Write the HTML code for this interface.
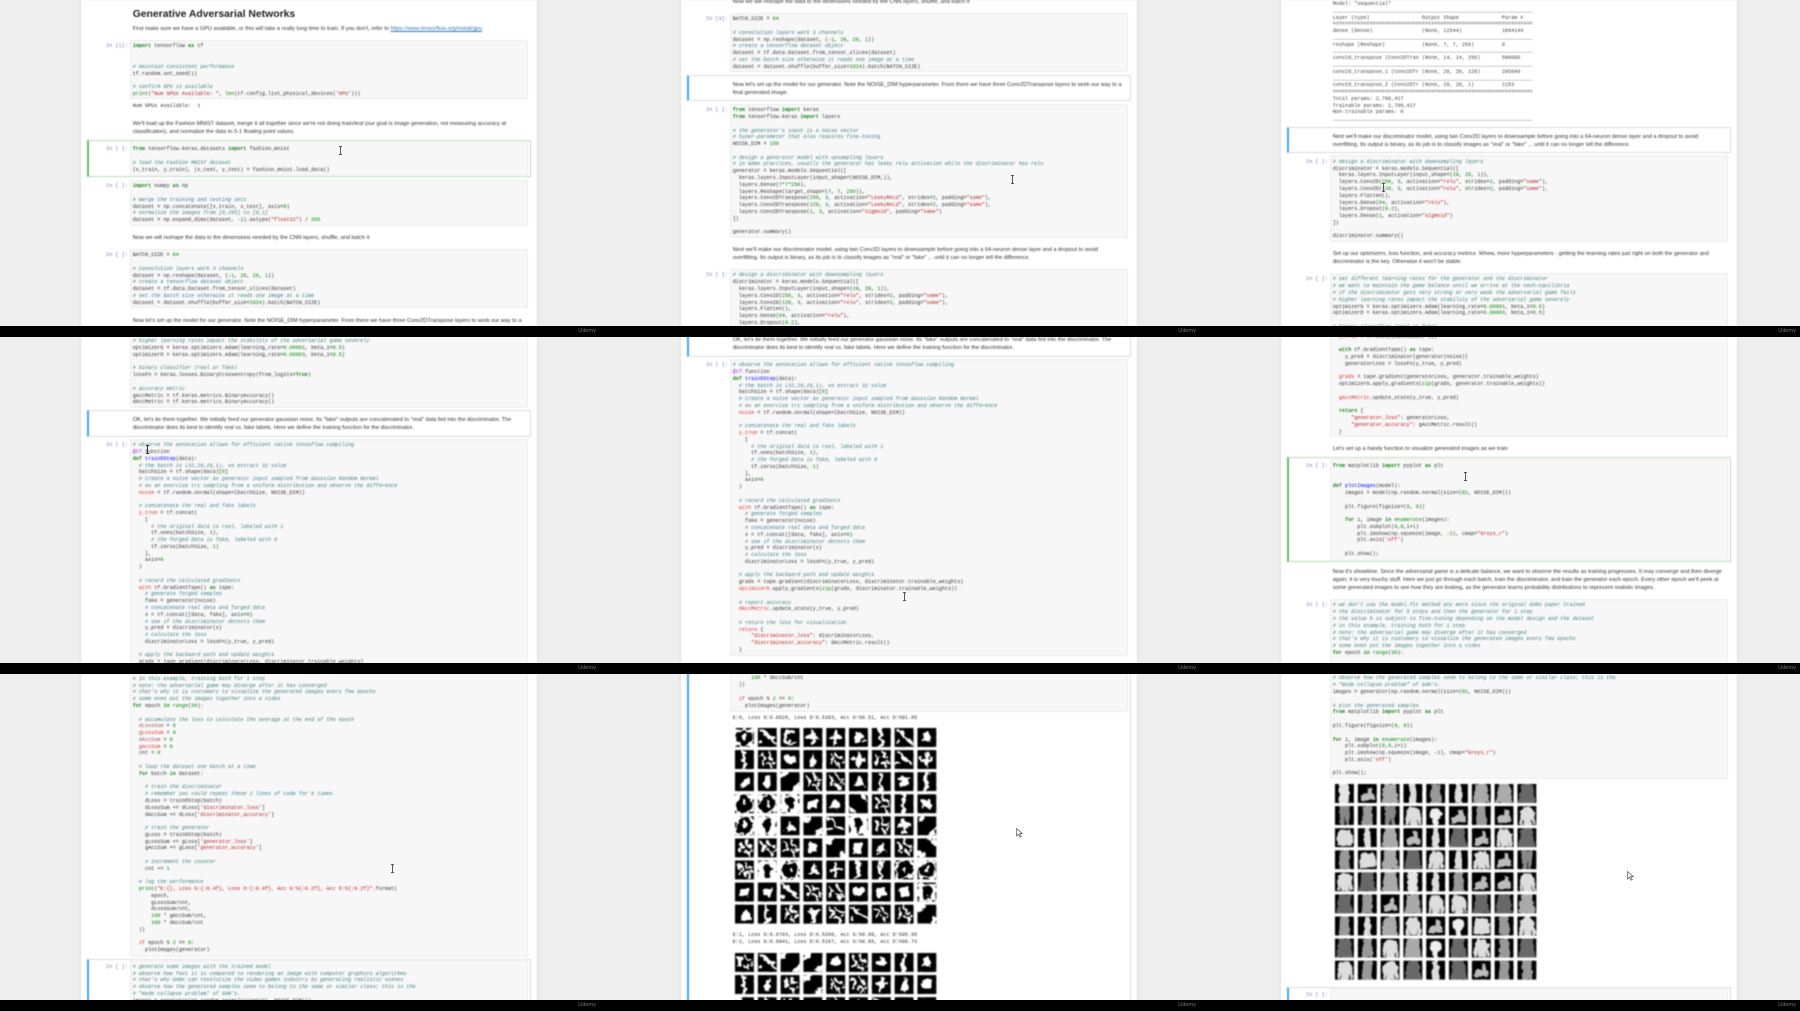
<!DOCTYPE html>
<html><head><meta charset="utf-8"><title>Generative Adversarial Networks</title>
<style>
html,body{margin:0;padding:0;background:#000;width:1800px;height:1011px;overflow:hidden}
.t{position:absolute;width:600px;height:337px;background:#000;overflow:hidden}
.v{position:absolute;left:0;top:0;width:600px;height:326px;background:#eee;overflow:hidden}
.v>*{filter:blur(.5px)}
.w{position:absolute;left:81px;width:456px;top:0;height:326px;background:#fff;box-shadow:0 0 3px #ccc}
.c{position:absolute;left:130px;width:398px;background:#f7f7f7;border:1px solid #ececec;box-sizing:border-box}
.s{position:absolute;left:87px;width:444px;background:#fff;border:1px solid #dcdcdc;border-left:2px solid #42a5f5;box-sizing:border-box}
.s.g{border-color:#b9dcbb;border-left-color:#66bb6a}
pre{position:absolute;left:132.7px;margin:.6px 0 0;font:5.13px/6.78px "Liberation Mono",monospace;color:#333;white-space:pre}
pre b{color:#1a851a;font-weight:700}
pre i{color:#408080;font-style:italic}
pre u{color:#ba2121;text-decoration:none}
pre s{color:#080;text-decoration:none}
pre a{color:#d33}
pre var{color:#00f;font-style:normal}
pre em{color:#a2f;font-style:normal}
.x{position:absolute;left:132.7px;margin-top:.6px;font:5.6px/8px "Liberation Sans",sans-serif;color:#333;white-space:nowrap}
.x span{color:#337ab7;text-decoration:underline}
h1{position:absolute;left:132.7px;top:8px;margin:0;font:700 10.4px/14px "Liberation Sans",sans-serif;color:#222;white-space:nowrap}
.p{position:absolute;left:90px;width:37.7px;margin-top:.6px;text-align:right;font:5.13px/6.78px "Liberation Mono",monospace;color:#7480ad;white-space:pre}
.u{position:absolute;right:4px;top:327px;font:5.6px/9px "Liberation Sans",sans-serif;color:#777;filter:blur(.3px)}
.k{position:absolute;filter:blur(.25px)}
.g9{position:absolute;left:135.3px;filter:blur(.7px)}
</style></head><body>
<svg width="0" height="0" style="position:absolute"><defs>
<filter id="o" x="0" y="0" width="100%" height="100%" color-interpolation-filters="sRGB"><feTurbulence type="fractalNoise" baseFrequency=".17" numOctaves="2" seed="3"/><feDisplacementMap in="SourceGraphic" scale="8" xChannelSelector="R" yChannelSelector="G"/></filter>
<filter id="q" x="0" y="0" width="100%" height="100%" color-interpolation-filters="sRGB"><feTurbulence type="fractalNoise" baseFrequency=".22" numOctaves="2" seed="7"/><feDisplacementMap in="SourceGraphic" scale="4" xChannelSelector="R" yChannelSelector="G"/></filter>
<pattern id="gb" width="22.8" height="22.08" patternUnits="userSpaceOnUse"><rect width="19" height="19"/></pattern>
<pattern id="gw" width="22.8" height="22.08" patternUnits="userSpaceOnUse"><path fill="#fff" d="M19 0h3.8v22.08H19zM0 19h22.8v3.08H0z"/></pattern>
<g id="b0"><rect width="19" height="19"/><ellipse cx="9.5" cy="9" rx="5.5" ry="4.5" fill="#fff"/></g>
<g id="b1"><rect width="19" height="19"/><path d="M2 3C8 1 7 8 11 9S15 14 18 15M1 16l4-4" stroke="#fff" stroke-width="3" fill="none"/></g>
<g id="b2"><rect width="19" height="19" fill="#fff"/><circle cx="9.5" cy="9.5" r="8" fill="#000"/><path d="M8 6h3v6H8z" fill="#fff"/></g>
<g id="b3"><rect width="19" height="19"/><path d="M9.5 2v15M3 9h13" stroke="#fff" stroke-width="3.5"/></g>
<g id="bb"><rect width="19" height="19"/><path d="M3 3l4 5-3 6M10 1l2 6 5 1M9 12l4 2 1 4M15 13l3-2" stroke="#fff" stroke-width="2.5" fill="none"/></g>
<g id="b4"><rect width="19" height="19"/><path d="M10 0h9v8l-6-2zM0 12l5 1 3 6H0z" fill="#fff"/></g>
<g id="b5"><rect width="19" height="19"/><path d="M4 14L11 4l5 10z" fill="#fff"/></g>
<g id="b6"><rect width="19" height="19"/><path d="M7 0C13 4 5 9 9 13S8 17 8 19" stroke="#fff" stroke-width="3.5" fill="none"/></g>
<g id="b7"><rect width="19" height="19"/><path d="M0 0h8l-2 5-6 2zM19 19h-8l3-6 5-2z" fill="#fff"/></g>
<g id="b8"><rect width="19" height="19" fill="#fff"/><path d="M9 2c5 1 6 5 4 8s0 6-4 7c-3 0-2-4-3-6s-1-8 3-9z"/></g>
<g id="b9"><rect width="19" height="19"/><path d="M2 5h15l-5 5v8H8v-8z" fill="#fff"/></g>
<g id="ba"><rect width="19" height="19"/><rect x="5" y="5" width="9" height="9" rx="2" fill="#fff"/></g>
<g id="bc"><rect width="19" height="19"/><path d="M14 4C6 2 3 8 5 12s6 3 9 2" stroke="#fff" stroke-width="3" fill="none"/></g>
<g id="bd"><rect width="19" height="19"/><path d="M11 2C13 8 14 14 10 17 7 15 5 12 7 9s3-5 4-7z" fill="#fff"/></g>
<g id="f0"><rect width="19" height="19"/><rect x="4" width="10" height="19" rx="2" fill="#e4e4e4"/></g>
<g id="f1"><rect width="19" height="19"/><path d="M7 0h5l1 8v11H6V8z" fill="#ddd"/></g>
<g id="f2"><rect width="19" height="19"/><path d="M5 0h9l1 19H4z" fill="#999"/></g>
<g id="f3"><rect width="19" height="19"/><path d="M4 0h11l3 19H1z" fill="#aaa"/></g>
<g id="f4"><rect width="19" height="19"/><path d="M4 0h11l3 19H1z" fill="#686868"/></g>
<g id="f5"><rect width="19" height="19"/><path d="M6 1h7l4 4 1 13-3 1-1-7v7H6v-7l-1 7-3-1 1-13z" fill="#ddd"/></g>
<g id="f6"><rect width="19" height="19"/><path d="M4 2h11l3 6v9l-16 1V8z" fill="#ddd"/></g>
<g id="f7"><rect width="19" height="19"/><path d="M3 11c4-3 9-3 13-1l1 6-14 1zM10 3l4 1v5l-4 1z" fill="#bbb"/></g>
<g id="f8"><rect width="19" height="19"/><circle cx="9.5" cy="8" r="6" fill="#eee"/><rect x="7" y="12" width="5" height="7" fill="#eee"/></g>
<g id="f9"><rect width="19" height="19"/><path d="M4 0h11l-1 19h-3l-1-9-1 9H5z" fill="#888"/></g>
</defs></svg>

<!-- Tile 1 -->
<div class="t" style="left:0;top:0"><div class="v"><div class="w"></div>
<h1>Generative Adversarial Networks</h1>
<div class="x" style="top:24.7px">First make sure we have a GPU available, or this will take a really long time to train. If you don't, refer to <span>https://www.tensorflow.org/install/gpu</span></div>
<div class="c" style="top:40px;height:59.3px"></div>
<div class="p" style="top:42.9px">In [1]:</div>
<pre style="top:42.9px"><b>import</b> tensorflow <b>as</b> tf


<i># maintain consistent performance</i>
tf.random.set_seed(<s>1</s>)

<i># confirm GPU is available</i>
<s>print</s>(<u>"Num GPUs Available: "</u>, <s>len</s>(tf.config.list_physical_devices(<u>'GPU'</u>)))</pre>
<pre style="top:102.3px">Num GPUs Available:  1</pre>
<div class="x" style="top:119px">We'll load up the Fashion MNIST dataset, merge it all together since we're not doing train/test (our goal is image generation, not measuring accuracy at<br>classification), and normalize the data to 0-1 floating point values.</div>
<div class="s g" style="top:140.3px;height:37px"></div>
<div class="c" style="top:141.3px;height:35px"></div>
<div class="p" style="top:145.6px">In [ ]:</div>
<pre style="top:145.6px"><b>from</b> tensorflow.keras.datasets <b>import</b> fashion_mnist

<i># load the Fashion MNIST dataset</i>
(x_train, y_train), (x_test, y_test) = fashion_mnist.load_data()</pre>
<div class="c" style="top:180.3px;height:45.7px"></div>
<div class="p" style="top:182.6px">In [ ]:</div>
<pre style="top:182.6px"><b>import</b> numpy <b>as</b> np

<i># merge the training and testing sets</i>
dataset = np.concatenate([x_train, x_test], axis=<s>0</s>)
<i># normalize the images from [0,255] to [0,1]</i>
dataset = np.expand_dims(dataset, -<s>1</s>).astype(<u>"float32"</u>) / <s>255</s></pre>
<div class="x" style="top:233.7px">Now we will reshape the data to the dimensions needed by the CNN layers, shuffle, and batch it</div>
<div class="c" style="top:249.3px;height:59px"></div>
<div class="p" style="top:251.6px">In [ ]:</div>
<pre style="top:251.6px">BATCH_SIZE = <s>64</s>

<i># convolution layers work 3 channels</i>
dataset = np.reshape(dataset, (-<s>1</s>, <s>28</s>, <s>28</s>, <s>1</s>))
<i># create a tensorflow dataset object</i>
dataset = tf.data.Dataset.from_tensor_slices(dataset)
<i># set the batch size otherwise it reads one image at a time</i>
dataset = dataset.shuffle(buffer_size=<s>1024</s>).batch(BATCH_SIZE)</pre>
<div class="x" style="top:316px">Now let's set up the model for our generator. Note the NOISE_DIM hyperparameter. From there we have three Conv2DTranspose layers to work our way to a</div>
<svg class="k" style="left:337.5px;top:145.5px" width="5" height="9"><path d="M1 .5h3M2.5 .5v8M1 8.5h3" stroke="#555" fill="none"/></svg>
</div><div class="u">Udemy</div></div>

<!-- Tile 2 -->
<div class="t" style="left:600px;top:0"><div class="v"><div class="w"></div>
<div class="x" style="top:-2.3px">Now we will reshape the data to the dimensions needed by the CNN layers, shuffle, and batch it</div>
<div class="c" style="top:13.3px;height:59px"></div>
<div class="p" style="top:15.6px">In [4]:</div>
<pre style="top:15.6px">BATCH_SIZE = <s>64</s>

<i># convolution layers work 3 channels</i>
dataset = np.reshape(dataset, (-<s>1</s>, <s>28</s>, <s>28</s>, <s>1</s>))
<i># create a tensorflow dataset object</i>
dataset = tf.data.Dataset.from_tensor_slices(dataset)
<i># set the batch size otherwise it reads one image at a time</i>
dataset = dataset.shuffle(buffer_size=<s>1024</s>).batch(BATCH_SIZE)</pre>
<div class="s" style="top:75.3px;height:26px"></div>
<div class="x" style="top:80.3px">Now let's set up the model for our generator. Note the NOISE_DIM hyperparameter. From there we have three Conv2DTranspose layers to work our way to a<br>final generated image.</div>
<div class="c" style="top:104px;height:134px"></div>
<div class="p" style="top:106.6px">In [ ]:</div>
<pre style="top:106.6px"><b>from</b> tensorflow <b>import</b> keras
<b>from</b> tensorflow.keras <b>import</b> layers

<i># the generator's input is a noise vector</i>
<i># hyper-parameter that also requires fine-tuning</i>
NOISE_DIM = <s>150</s>

<i># design a generator model with upsampling layers</i>
<i># in GANs practices, usually the generator has leaky relu activation while the discriminator has relu</i>
generator = keras.models.Sequential([
  keras.layers.InputLayer(input_shape=(NOISE_DIM,)),
  layers.Dense(<s>7</s>*<s>7</s>*<s>256</s>),
  layers.Reshape(target_shape=(<s>7</s>, <s>7</s>, <s>256</s>)),
  layers.Conv2DTranspose(<s>256</s>, <s>3</s>, activation=<u>"LeakyReLU"</u>, strides=<s>2</s>, padding=<u>"same"</u>),
  layers.Conv2DTranspose(<s>128</s>, <s>3</s>, activation=<u>"LeakyReLU"</u>, strides=<s>2</s>, padding=<u>"same"</u>),
  layers.Conv2DTranspose(<s>1</s>, <s>3</s>, activation=<u>"sigmoid"</u>, padding=<u>"same"</u>)
])

generator.summary()</pre>
<div class="x" style="top:245.7px">Next we'll make our discriminator model, using two Conv2D layers to downsample before going into a 64-neuron dense layer and a dropout to avoid<br>overfitting. Its output is binary, as its job is to classify images as "real" or "fake" ... until it can no longer tell the difference.</div>
<div class="c" style="top:269.3px;height:80px"></div>
<div class="p" style="top:271.9px">In [ ]:</div>
<pre style="top:271.9px"><i># design a discriminator with downsampling layers</i>
discriminator = keras.models.Sequential([
  keras.layers.InputLayer(input_shape=(<s>28</s>, <s>28</s>, <s>1</s>)),
  layers.Conv2D(<s>256</s>, <s>3</s>, activation=<u>"relu"</u>, strides=<s>2</s>, padding=<u>"same"</u>),
  layers.Conv2D(<s>128</s>, <s>3</s>, activation=<u>"relu"</u>, strides=<s>2</s>, padding=<u>"same"</u>),
  layers.Flatten(),
  layers.Dense(<s>64</s>, activation=<u>"relu"</u>),
  layers.Dropout(<s>0.2</s>),</pre>
<svg class="k" style="left:409.5px;top:174.5px" width="5" height="9"><path d="M1 .5h3M2.5 .5v8M1 8.5h3" stroke="#555" fill="none"/></svg>
</div><div class="u">Udemy</div></div>

<!-- Tile 3 -->
<div class="t" style="left:1200px;top:0"><div class="v"><div class="w"></div>
<pre style="top:.4px;color:#444">Model: "sequential"
_________________________________________________________________
Layer (type)                 Output Shape              Param #
=================================================================
dense (Dense)                (None, 12544)             1894144
_________________________________________________________________
reshape (Reshape)            (None, 7, 7, 256)         0
_________________________________________________________________
conv2d_transpose (Conv2DTran (None, 14, 14, 256)       590080
_________________________________________________________________
conv2d_transpose_1 (Conv2DTr (None, 28, 28, 128)       295040
_________________________________________________________________
conv2d_transpose_2 (Conv2DTr (None, 28, 28, 1)         1153
=================================================================
Total params: 2,780,417
Trainable params: 2,780,417
Non-trainable params: 0
_________________________________________________________________</pre>
<div class="s" style="top:126.7px;height:26px"></div>
<div class="x" style="top:132px">Next we'll make our discriminator model, using two Conv2D layers to downsample before going into a 64-neuron dense layer and a dropout to avoid<br>overfitting. Its output is binary, as its job is to classify images as "real" or "fake" ... until it can no longer tell the difference.</div>
<div class="c" style="top:155.3px;height:86.7px"></div>
<div class="p" style="top:158.3px">In [ ]:</div>
<pre style="top:158.3px"><i># design a discriminator with downsampling layers</i>
discriminator = keras.models.Sequential([
  keras.layers.InputLayer(input_shape=(<s>28</s>, <s>28</s>, <s>1</s>)),
  layers.Conv2D(<s>256</s>, <s>3</s>, activation=<u>"relu"</u>, strides=<s>2</s>, padding=<u>"same"</u>),
  layers.Conv2D(<s>128</s>, <s>3</s>, activation=<u>"relu"</u>, strides=<s>2</s>, padding=<u>"same"</u>),
  layers.Flatten(),
  layers.Dense(<s>64</s>, activation=<u>"relu"</u>),
  layers.Dropout(<s>0.2</s>),
  layers.Dense(<s>1</s>, activation=<u>"sigmoid"</u>)
])

discriminator.summary()</pre>
<div class="x" style="top:249.7px">Set up our optimizers, loss function, and accuracy metrics. Whew, more hyperparameters - getting the learning rates just right on both the generator and<br>discriminator is the key. Otherwise it won't be stable.</div>
<div class="c" style="top:273.3px;height:70px"></div>
<div class="p" style="top:275.9px">In [ ]:</div>
<pre style="top:275.9px"><i># set different learning rates for the generator and the discriminator</i>
<i># we want to maintain the game balance until we arrive at the nash-equilibria</i>
<i># if the discriminator gets very strong or very weak the adversarial game fails</i>
<i># higher learning rates impact the stability of the adversarial game severely</i>
optimizerG = keras.optimizers.Adam(learning_rate=<s>0.00001</s>, beta_1=<s>0.5</s>)
optimizerD = keras.optimizers.Adam(learning_rate=<s>0.00003</s>, beta_1=<s>0.5</s>)

<i># binary classifier (real or fake)</i></pre>
<svg class="k" style="left:181px;top:183px" width="5" height="9"><path d="M1 .5h3M2.5 .5v8M1 8.5h3" stroke="#555" fill="none"/></svg>
</div><div class="u">Udemy</div></div>

<!-- Tile 4 -->
<div class="t" style="left:0;top:337px"><div class="v"><div class="w"></div>
<div class="c" style="top:-22px;height:92.7px"></div>
<pre style="top:-19.7px"><i># set different learning rates for the generator and the discriminator</i>
<i># we want to maintain the game balance until we arrive at the nash-equilibria</i>
<i># if the discriminator gets very strong or very weak the adversarial game fails</i>
<i># higher learning rates impact the stability of the adversarial game severely</i>
optimizerG = keras.optimizers.Adam(learning_rate=<s>0.00001</s>, beta_1=<s>0.5</s>)
optimizerD = keras.optimizers.Adam(learning_rate=<s>0.00003</s>, beta_1=<s>0.5</s>)

<i># binary classifier (real or fake)</i>
lossFn = keras.losses.BinaryCrossentropy(from_logits=<b>True</b>)

<i># accuracy metric</i>
gAccMetric = tf.keras.metrics.BinaryAccuracy()
dAccMetric = tf.keras.metrics.BinaryAccuracy()</pre>
<div class="s" style="top:73.3px;height:26.4px"></div>
<div class="x" style="top:78.7px">OK, let's tie them together. We initially feed our generator gaussian noise. Its "fake" outputs are concatenated to "real" data fed into the discriminator. The<br>discriminator does its best to identify real vs. fake labels. Here we define the training function for the discriminator.</div>
<div class="c" style="top:102.3px;height:240px"></div>
<div class="p" style="top:104.6px">In [ ]:</div>
<pre style="top:104.6px"><i># observe the annotation allows for efficient native tensoflow compiling</i>
<em>@tf.</em>function
<b>def</b> <var>trainDStep</var>(data):
  <i># the batch is (32,28,28,1), so extract 32 value</i>
  batchSize = tf.shape(data)[<s>0</s>]
  <i># create a noise vector as generator input sampled from Gaussian Random Normal</i>
  <i># As an exercise try sampling from a uniform distribution and observe the difference</i>
  <a>noise</a> = tf.random.normal(shape=(batchSize, NOISE_DIM))

  <i># concatenate the real and fake labels</i>
  <a>y_true</a> = tf.concat(
    [
      <i># the original data is real, labeled with 1</i>
      tf.ones(batchSize, <s>1</s>),
      <i># the forged data is fake, labeled with 0</i>
      tf.zeros(batchSize, <s>1</s>)
    ],
    axis=<s>0</s>
  )

  <i># record the calculated gradients</i>
  <a>with</a> tf.GradientTape() <b>as</b> tape:
    <i># generate forged samples</i>
    fake = generator(noise)
    <i># concatenate real data and forged data</i>
    x = tf.concat([data, fake], axis=<s>0</s>)
    <i># see if the discriminator detects them</i>
    y_pred = discriminator(x)
    <i># calculate the loss</i>
    discriminatorLoss = lossFn(y_true, y_pred)

  <i># apply the backward path and update weights</i>
  grads = tape.gradient(discriminatorLoss, discriminator.trainable_weights)</pre>
<svg class="k" style="left:144.5px;top:108px" width="5" height="9" viewBox="0 0 5 9"><path d="M1 .5h3M2.5 .5v8M1 8.5h3" stroke="#333" fill="none"/></svg>
</div><div class="u">Udemy</div></div>

<!-- Tile 5 -->
<div class="t" style="left:600px;top:337px"><div class="v"><div class="w"></div>
<div class="s" style="top:-6.7px;height:26.4px"></div>
<div class="x" style="top:-1.3px">OK, let's tie them together. We initially feed our generator gaussian noise. Its "fake" outputs are concatenated to "real" data fed into the discriminator. The<br>discriminator does its best to identify real vs. fake labels. Here we define the training function for the discriminator.</div>
<div class="c" style="top:22.3px;height:296.4px"></div>
<div class="p" style="top:24.6px">In [ ]:</div>
<pre style="top:24.6px"><i># observe the annotation allows for efficient native tensoflow compiling</i>
<em>@tf.</em>function
<b>def</b> <var>trainDStep</var>(data):
  <i># the batch is (32,28,28,1), so extract 32 value</i>
  batchSize = tf.shape(data)[<s>0</s>]
  <i># create a noise vector as generator input sampled from Gaussian Random Normal</i>
  <i># As an exercise try sampling from a uniform distribution and observe the difference</i>
  <a>noise</a> = tf.random.normal(shape=(batchSize, NOISE_DIM))

  <i># concatenate the real and fake labels</i>
  <a>y_true</a> = tf.concat(
    [
      <i># the original data is real, labeled with 1</i>
      tf.ones(batchSize, <s>1</s>),
      <i># the forged data is fake, labeled with 0</i>
      tf.zeros(batchSize, <s>1</s>)
    ],
    axis=<s>0</s>
  )

  <i># record the calculated gradients</i>
  <a>with</a> tf.GradientTape() <b>as</b> tape:
    <i># generate forged samples</i>
    fake = generator(noise)
    <i># concatenate real data and forged data</i>
    x = tf.concat([data, fake], axis=<s>0</s>)
    <i># see if the discriminator detects them</i>
    y_pred = discriminator(x)
    <i># calculate the loss</i>
    discriminatorLoss = lossFn(y_true, y_pred)

  <i># apply the backward path and update weights</i>
  grads = tape.gradient(discriminatorLoss, discriminator.trainable_weights)
  <a>optimizerD</a>.apply_gradients(<s>zip</s>(grads, discriminator.trainable_weights))

  <i># report accuracy</i>
  <a>dAccMetric</a>.update_state(y_true, y_pred)

  <i># return the loss for visualization</i>
  <a>return</a> {
      <u>"discriminator_loss"</u>: discriminatorLoss,
      <u>"discriminator_accuracy"</u>: dAccMetric.result()
  }</pre>
<svg class="k" style="left:301.5px;top:254.5px" width="5" height="9"><path d="M1 .5h3M2.5 .5v8M1 8.5h3" stroke="#555" fill="none"/></svg>
</div><div class="u">Udemy</div></div>

<!-- Tile 6 -->
<div class="t" style="left:1200px;top:337px"><div class="v"><div class="w"></div>
<div class="c" style="top:-10px;height:109.7px"></div>
<pre style="top:-3.8px">  <a>y_true</a> = tf.ones((batchSize, <s>1</s>))

  <b>with</b> tf.GradientTape() <b>as</b> tape:
    y_pred = discriminator(generator(noise))
    generatorLoss = lossFn(y_true, y_pred)

  <a>grads</a> = tape.gradient(generatorLoss, generator.trainable_weights)
  optimizerG.apply_gradients(<s>zip</s>(grads, generator.trainable_weights))

  <a>gAccMetric</a>.update_state(y_true, y_pred)

  <b>return</b> {
      <u>"generator_loss"</u>: generatorLoss,
      <u>"generator_accuracy"</u>: gAccMetric.result()
  }</pre>
<div class="x" style="top:107px">Let's set up a handy function to visualize generated images as we train</div>
<div class="s g" style="top:120.3px;height:105px"></div>
<div class="c" style="top:121.3px;height:103px"></div>
<div class="p" style="top:125.3px">In [ ]:</div>
<pre style="top:125.3px"><b>from</b> matplotlib <b>import</b> pyplot <b>as</b> plt


<b>def</b> <var>plotImages</var>(model):
    images = model(np.random.normal(size=(<s>81</s>, NOISE_DIM)))

    plt.figure(figsize=(<s>9</s>, <s>9</s>))

    <b>for</b> i, image <b>in</b> <s>enumerate</s>(images):
        plt.subplot(<s>9</s>,<s>9</s>,i+<s>1</s>)
        plt.imshow(np.squeeze(image, -<s>1</s>), cmap=<u>"Greys_r"</u>)
        plt.axis(<u>'off'</u>)

    plt.show();</pre>
<div class="x" style="top:230.3px">Now it's showtime. Since the adversarial game is a delicate balance, we want to observe the results as training progresses. It may converge and then diverge<br>again; it is very touchy stuff. Here we just go through each batch, train the discriminator, and train the generator each epoch. Every other epoch we'll peek at<br>some generated images to see how they are looking, as the generator learns probability distributions to represent realistic images.</div>
<div class="c" style="top:262.3px;height:70px"></div>
<div class="p" style="top:264.9px">In [ ]:</div>
<pre style="top:264.9px"><i># we don't use the model.fit method any more since the original GANs paper trained</i>
<i># the discriminator for 5 steps and then the generator for 1 step</i>
<i># the value 5 is subject to fine-tuning depending on the model design and the dataset</i>
<i># in this example, training both for 1 step</i>
<i># note: the adversarial game may diverge after it has converged</i>
<i># that's why it is customary to visualize the generated images every few epochs</i>
<i># some even put the images together into a video</i>
<b>for</b> epoch <b>in</b> <s>range</s>(<s>30</s>):</pre>
<svg class="k" style="left:262.5px;top:134.5px" width="5" height="9"><path d="M1 .5h3M2.5 .5v8M1 8.5h3" stroke="#555" fill="none"/></svg>
</div><div class="u">Udemy</div></div>

<!-- Tile 7 -->
<div class="t" style="left:0;top:674px"><div class="v"><div class="w"></div>
<div class="c" style="top:-10px;height:292.7px"></div>
<pre style="top:1.3px"><i># in this example, training both for 1 step</i>
<i># note: the adversarial game may diverge after it has converged</i>
<i># that's why it is customary to visualize the generated images every few epochs</i>
<i># some even put the images together into a video</i>
<b>for</b> epoch <b>in</b> <s>range</s>(<s>30</s>):

  <i># accumulate the loss to calculate the average at the end of the epoch</i>
  <a style="color:#a55">dLossSum</a> = <s>0</s>
  <a>gLossSum</a> = <s>0</s>
  <a style="color:#a55">dAccSum</a> = <s>0</s>
  <a>gAccSum</a> = <s>0</s>
  cnt = <s>0</s>

  <i># loop the dataset one batch at a time</i>
  <b>for</b> batch <b>in</b> dataset:

    <i># train the discriminator</i>
    <i># remember you could repeat these 2 lines of code for K times</i>
    dLoss = trainDStep(batch)
    dLossSum += dLoss[<u>'discriminator_loss'</u>]
    dAccSum += dLoss[<u>'discriminator_accuracy'</u>]

    <i># train the generator</i>
    gLoss = trainGStep(batch)
    gLossSum += gLoss[<u>'generator_loss'</u>]
    gAccSum += gLoss[<u>'generator_accuracy'</u>]

    <i># increment the counter</i>
    cnt += <s>1</s>

  <i># log the performance</i>
  <s>print</s>(<u>"E:{}, Loss G:{:0.4f}, Loss D:{:0.4f}, Acc G:%{:0.2f}, Acc D:%{:0.2f}"</u>.format(
      epoch,
      gLossSum/cnt,
      dLossSum/cnt,
      <s>100</s> * gAccSum/cnt,
      <s>100</s> * dAccSum/cnt
  ))

  <a>if</a> epoch % <s>2</s> == <s>0</s>:
    plotImages(generator)</pre>
<div class="s" style="top:285px;height:60px"></div>
<div class="c" style="top:286px;height:58px"></div>
<div class="p" style="top:289.3px">In [ ]:</div>
<pre style="top:289.3px"><i># generate some images with the trained model</i>
<i># observe how fast it is compared to rendering an image with computer graphics algorithms</i>
<i># that's why GANs can revolutize the video games industry by generating realistic scenes</i>
<i># observe how the generated samples seem to belong to the same or similar class; this is the</i>
<i># "mode collapse problem" of GAN's.</i>
images = generator(np.random.normal(size=(<s>81</s>, NOISE_DIM)))</pre>
<svg class="k" style="left:389.5px;top:189.5px" width="5" height="9"><path d="M1 .5h3M2.5 .5v8M1 8.5h3" stroke="#555" fill="none"/></svg>
</div><div class="u">Udemy</div></div>

<!-- Tile 8 -->
<div class="t" style="left:600px;top:674px"><div class="v"><div class="w"></div>
<div class="s" style="top:-10px;height:350px"></div>
<div class="c" style="top:-10px;height:47.7px"></div>
<pre style="top:.9px">      <s>100</s> * dAccSum/cnt
  ))

  <a>if</a> epoch % <s>2</s> == <s>0</s>:
    plotImages(generator)</pre>
<pre style="top:40.3px">E:0, Loss G:0.6626, Loss D:0.5393, Acc G:%0.51, Acc D:%91.05</pre>
<svg class="g9" style="top:54.3px" width="202" height="196">
<rect width="100%" height="100%" fill="url(#gb)"/>
<g filter="url(#o)">
<g><use href="#b2"/><use href="#b1" x="22.8"/><use href="#bc" x="45.6"/><use href="#b3" x="68.4"/><use href="#b3" x="91.2"/><use href="#b0" x="114"/><use href="#b6" x="136.8"/><use href="#b1" x="159.6"/><use href="#ba" x="182.4"/></g>
<g transform="translate(0,22.08)"><use href="#b6"/><use href="#bb" x="22.8"/><use href="#b0" x="45.6"/><use href="#bd" x="68.4"/><use href="#bb" x="91.2"/><use href="#b3" x="114"/><use href="#bb" x="136.8"/><use href="#b1" x="159.6"/><use href="#b3" x="182.4"/></g>
<g transform="translate(0,44.16)"><use href="#b5"/><use href="#bd" x="22.8"/><use href="#b7" x="45.6"/><use href="#bb" x="68.4"/><use href="#bb" x="91.2"/><use href="#b5" x="114"/><use href="#b6" x="136.8"/><use href="#ba" x="159.6"/><use href="#b6" x="182.4"/></g>
<g transform="translate(0,66.24)"><use href="#b2"/><use href="#b2" x="22.8"/><use href="#b8" x="45.6"/><use href="#ba" x="68.4"/><use href="#b5" x="91.2"/><use href="#b4" x="114"/><use href="#bb" x="136.8"/><use href="#b6" x="159.6"/><use href="#ba" x="182.4"/></g>
<g transform="translate(0,88.32)"><use href="#b2"/><use href="#b8" x="22.8"/><use href="#b5" x="45.6"/><use href="#b7" x="68.4"/><use href="#b1" x="91.2"/><use href="#b8" x="114"/><use href="#bb" x="136.8"/><use href="#b3" x="159.6"/><use href="#b7" x="182.4"/></g>
<g transform="translate(0,110.4)"><use href="#bb"/><use href="#bb" x="22.8"/><use href="#bb" x="45.6"/><use href="#ba" x="68.4"/><use href="#b7" x="91.2"/><use href="#ba" x="114"/><use href="#b5" x="136.8"/><use href="#bb" x="159.6"/><use href="#b4" x="182.4"/></g>
<g transform="translate(0,132.48)"><use href="#bb"/><use href="#b8" x="22.8"/><use href="#b2" x="45.6"/><use href="#b5" x="68.4"/><use href="#b3" x="91.2"/><use href="#b6" x="114"/><use href="#b6" x="136.8"/><use href="#b2" x="159.6"/><use href="#b2" x="182.4"/></g>
<g transform="translate(0,154.56)"><use href="#ba"/><use href="#ba" x="22.8"/><use href="#b1" x="45.6"/><use href="#bb" x="68.4"/><use href="#bb" x="91.2"/><use href="#b0" x="114"/><use href="#ba" x="136.8"/><use href="#ba" x="159.6"/><use href="#b8" x="182.4"/></g>
<g transform="translate(0,176.64)"><use href="#b5"/><use href="#b6" x="22.8"/><use href="#bb" x="45.6"/><use href="#b9" x="68.4"/><use href="#bb" x="91.2"/><use href="#b1" x="114"/><use href="#bb" x="136.8"/><use href="#bb" x="159.6"/><use href="#b7" x="182.4"/></g>
</g>
<rect width="100%" height="100%" fill="url(#gw)"/>
</svg>
<pre style="top:257.6px">E:1, Loss G:0.6703, Loss D:0.5260, Acc G:%0.98, Acc D:%95.95
E:2, Loss G:0.6841, Loss D:0.5167, Acc G:%0.85, Acc D:%96.73</pre>
<svg class="g9" style="top:278.7px" width="202" height="66">
<rect width="100%" height="100%" fill="url(#gb)"/>
<g filter="url(#o)">
<g><use href="#bb"/><use href="#b1" x="22.8"/><use href="#b7" x="45.6"/><use href="#b7" x="68.4"/><use href="#b0" x="91.2"/><use href="#bb" x="114"/><use href="#b0" x="136.8"/><use href="#b6" x="159.6"/><use href="#ba" x="182.4"/></g>
<g transform="translate(0,22.08)"><use href="#b6"/><use href="#bd" x="22.8"/><use href="#bb" x="45.6"/><use href="#b7" x="68.4"/><use href="#bb" x="91.2"/><use href="#bb" x="114"/><use href="#b3" x="136.8"/><use href="#bd" x="159.6"/><use href="#ba" x="182.4"/></g>
<g transform="translate(0,44.16)"><use href="#b7"/><use href="#b6" x="22.8"/><use href="#bb" x="45.6"/><use href="#b5" x="68.4"/><use href="#bb" x="91.2"/><use href="#b3" x="114"/><use href="#b1" x="136.8"/><use href="#b5" x="159.6"/><use href="#b0" x="182.4"/></g>
</g>
<rect width="100%" height="100%" fill="url(#gw)"/>
</svg>
<svg class="k" style="left:416px;top:154px" width="7" height="10"><path d="M.5 .5v7.5l2-1.8 1.6 3 1.2-.6-1.6-3h2.6z" fill="#fff" stroke="#555" stroke-width=".7"/></svg>
</div><div class="u">Udemy</div></div>

<!-- Tile 9 -->
<div class="t" style="left:1200px;top:674px"><div class="v"><div class="w"></div>
<div class="c" style="top:-10px;height:115.3px"></div>
<pre style="top:-5.9px"><i># that's why GANs can revolutize the video games industry by generating realistic scenes</i>
<i># observe how the generated samples seem to belong to the same or similar class; this is the</i>
<i># "mode collapse problem" of GAN's.</i>
images = generator(np.random.normal(size=(<s>81</s>, NOISE_DIM)))

<i># plot the generated samples</i>
<b>from</b> matplotlib <b>import</b> pyplot <b>as</b> plt

plt.figure(figsize=(<s>9</s>, <s>9</s>))

<b>for</b> i, image <b>in</b> <s>enumerate</s>(images):
    plt.subplot(<s>9</s>,<s>9</s>,i+<s>1</s>)
    plt.imshow(np.squeeze(image, -<s>1</s>), cmap=<u>"Greys_r"</u>)
    plt.axis(<u>'off'</u>)

plt.show();</pre>
<svg class="g9" style="top:110px;left:135px" width="202" height="196">
<rect width="100%" height="100%" fill="url(#gb)"/>
<g filter="url(#q)">
<g><use href="#f0"/><use href="#f7" x="22.8"/><use href="#f3" x="45.6"/><use href="#f1" x="68.4"/><use href="#f2" x="91.2"/><use href="#f1" x="114"/><use href="#f3" x="136.8"/><use href="#f3" x="159.6"/><use href="#f4" x="182.4"/></g>
<g transform="translate(0,22.08)"><use href="#f9"/><use href="#f2" x="22.8"/><use href="#f9" x="45.6"/><use href="#f5" x="68.4"/><use href="#f8" x="91.2"/><use href="#f7" x="114"/><use href="#f2" x="136.8"/><use href="#f7" x="159.6"/><use href="#f5" x="182.4"/></g>
<g transform="translate(0,44.16)"><use href="#f6"/><use href="#f1" x="22.8"/><use href="#f3" x="45.6"/><use href="#f7" x="68.4"/><use href="#f1" x="91.2"/><use href="#f4" x="114"/><use href="#f7" x="136.8"/><use href="#f5" x="159.6"/><use href="#f4" x="182.4"/></g>
<g transform="translate(0,66.24)"><use href="#f2"/><use href="#f6" x="22.8"/><use href="#f3" x="45.6"/><use href="#f4" x="68.4"/><use href="#f5" x="91.2"/><use href="#f1" x="114"/><use href="#f5" x="136.8"/><use href="#f7" x="159.6"/><use href="#f9" x="182.4"/></g>
<g transform="translate(0,88.32)"><use href="#f5"/><use href="#f4" x="22.8"/><use href="#f3" x="45.6"/><use href="#f0" x="68.4"/><use href="#f1" x="91.2"/><use href="#f2" x="114"/><use href="#f7" x="136.8"/><use href="#f7" x="159.6"/><use href="#f5" x="182.4"/></g>
<g transform="translate(0,110.4)"><use href="#f4"/><use href="#f2" x="22.8"/><use href="#f7" x="45.6"/><use href="#f3" x="68.4"/><use href="#f5" x="91.2"/><use href="#f5" x="114"/><use href="#f4" x="136.8"/><use href="#f4" x="159.6"/><use href="#f3" x="182.4"/></g>
<g transform="translate(0,132.48)"><use href="#f2"/><use href="#f1" x="22.8"/><use href="#f3" x="45.6"/><use href="#f5" x="68.4"/><use href="#f7" x="91.2"/><use href="#f8" x="114"/><use href="#f6" x="136.8"/><use href="#f2" x="159.6"/><use href="#f5" x="182.4"/></g>
<g transform="translate(0,154.56)"><use href="#f4"/><use href="#f2" x="22.8"/><use href="#f5" x="45.6"/><use href="#f3" x="68.4"/><use href="#f8" x="91.2"/><use href="#f4" x="114"/><use href="#f5" x="136.8"/><use href="#f2" x="159.6"/><use href="#f4" x="182.4"/></g>
<g transform="translate(0,176.64)"><use href="#f5"/><use href="#f2" x="22.8"/><use href="#f5" x="45.6"/><use href="#f4" x="68.4"/><use href="#f1" x="91.2"/><use href="#f4" x="114"/><use href="#f7" x="136.8"/><use href="#f2" x="159.6"/><use href="#f2" x="182.4"/></g>
</g>
<rect width="100%" height="100%" fill="url(#gw)"/>
</svg>
<div class="s" style="top:313px;height:30px"></div>
<div class="c" style="top:314px;height:28px"></div>
<div class="p" style="top:317.6px">In [ ]:</div>
<svg class="k" style="left:427px;top:197px" width="7" height="10"><path d="M.5 .5v7.5l2-1.8 1.6 3 1.2-.6-1.6-3h2.6z" fill="#fff" stroke="#555" stroke-width=".7"/></svg>
</div><div class="u">Udemy</div></div>
</body></html>
